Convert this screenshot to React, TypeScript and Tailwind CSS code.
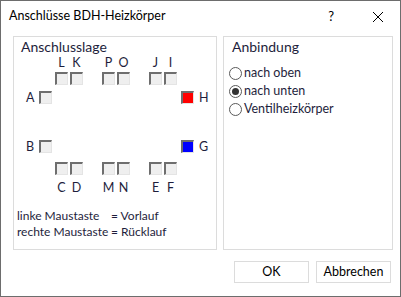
const font = { fontFamily: 'Lato, "Noto Sans", sans-serif' };

function Box({ color }: { color?: 'red' | 'blue' }) {
    const fill = color === 'red' ? 'bg-[#ff0000]' : color === 'blue' ? 'bg-[#0000ff]' : 'bg-[#efefef]';
    return (
        <div
            className={`h-[13px] w-[13px] border-t-2 border-l-2 border-r border-b border-t-[#6e6e6e] border-l-[#6e6e6e] border-r-[#e4e4e4] border-b-[#e4e4e4] ${fill}`}
        />
    );
}

function Pair({ labels, top }: { labels: [string, string]; top: boolean }) {
    const labelRow = (
        <div className="flex gap-[2px]">
            {labels.map((l) => (
                <span key={l} className="w-[13px] text-center text-[12.5px] leading-[14px]">
                    {l}
                </span>
            ))}
        </div>
    );
    return (
        <div className="flex flex-col">
            {top && labelRow}
            {top && <div className="h-[2px]" />}
            <div className="flex gap-[2px]">
                <Box />
                <Box />
            </div>
            {!top && <div className="h-[6px]" />}
            {!top && labelRow}
        </div>
    );
}

function PairRow({ top }: { top: boolean }) {
    const groups: [string, string][] = top
        ? [['L', 'K'], ['P', 'O'], ['J', 'I']]
        : [['C', 'D'], ['M', 'N'], ['E', 'F']];
    return (
        <div className="flex pl-[41px] gap-[19px]">
            {groups.map((g) => (
                <Pair key={g[0]} labels={g} top={top} />
            ))}
        </div>
    );
}

function SideRow({ left, right, color }: { left: string; right: string; color: 'red' | 'blue' }) {
    return (
        <div className="flex h-[13px] items-center">
            <span className="w-[25px] pl-[12px] text-[12.5px] leading-[13px]">{left}</span>
            <Box />
            <div className="flex-1" />
            <Box color={color} />
            <span className="w-[22px] pl-[5px] text-[12.5px] leading-[13px]">{right}</span>
        </div>
    );
}

function Radio({ label, checked }: { label: string; checked?: boolean }) {
    return (
        <div className="flex h-[18px] items-center gap-[2px]">
            <div className="flex h-[13px] w-[13px] items-center justify-center rounded-full border border-[#5a5a5a] bg-white">
                {checked && <div className="h-[7px] w-[7px] rounded-full bg-[#333333]" />}
            </div>
            <span className="text-[12.5px]">{label}</span>
        </div>
    );
}

export default function App() {
    return (
        <div className="flex h-[297px] w-[401px] flex-col border border-[#6d6d6d] bg-white text-[#1e1e3c]" style={font}>
            <div className="flex h-[35px] items-center pl-[8px] pr-[16px] text-[12.5px] text-black">
                <span className="flex-1 pb-[4px]">Anschlüsse BDH-Heizkörper</span>
                <span className="pb-[4px] mr-[38px] text-[13px]">?</span>
                <svg width="12" height="12" viewBox="0 0 12 12" className="mb-[4px]">
                    <path d="M1 1L11 11M11 1L1 11" stroke="#000" strokeWidth="1" />
                </svg>
            </div>

            <div className="flex gap-[6px] pl-[12px]">
                <div className="flex h-[214px] w-[204px] flex-col border border-[#dcdcdc]">
                    <div className="pl-[7px] pt-[1px] text-[14px] leading-[17px]">Anschlusslage</div>
                    <div className="mt-[1px]">
                        <PairRow top />
                    </div>
                    <div className="mt-[6px]">
                        <SideRow left="A" right="H" color="red" />
                    </div>
                    <div className="mt-[36px]">
                        <SideRow left="B" right="G" color="blue" />
                    </div>
                    <div className="mt-[9px]">
                        <PairRow top={false} />
                    </div>
                    <div className="mt-[13px] pl-[3px] text-[12px] leading-[16px] whitespace-nowrap">
                        <div className="flex">
                            <span className="w-[94px]">linke Maustaste</span>
                            <span>= Vorlauf</span>
                        </div>
                        <div className="flex">
                            <span className="w-[94px]">rechte Maustaste</span>
                            <span>= Rücklauf</span>
                        </div>
                    </div>
                </div>

                <div className="flex h-[214px] w-[170px] flex-col border border-[#dcdcdc]">
                    <div className="pl-[8px] pt-[1px] text-[14px] leading-[17px]">Anbindung</div>
                    <div className="mt-[9px] flex flex-col pl-[5px]">
                        <Radio label="nach oben" />
                        <Radio label="nach unten" checked />
                        <Radio label="Ventilheizkörper" />
                    </div>
                </div>
            </div>

            <div className="mt-[11px] flex justify-end gap-[7px] pr-[9px]">
                <button className="h-[22px] w-[75px] border border-[#dcdcdc] bg-white text-[12.5px] text-black">OK</button>
                <button className="h-[22px] w-[75px] border border-[#dcdcdc] bg-white text-[12.5px] text-black">Abbrechen</button>
            </div>
        </div>
    );
}
